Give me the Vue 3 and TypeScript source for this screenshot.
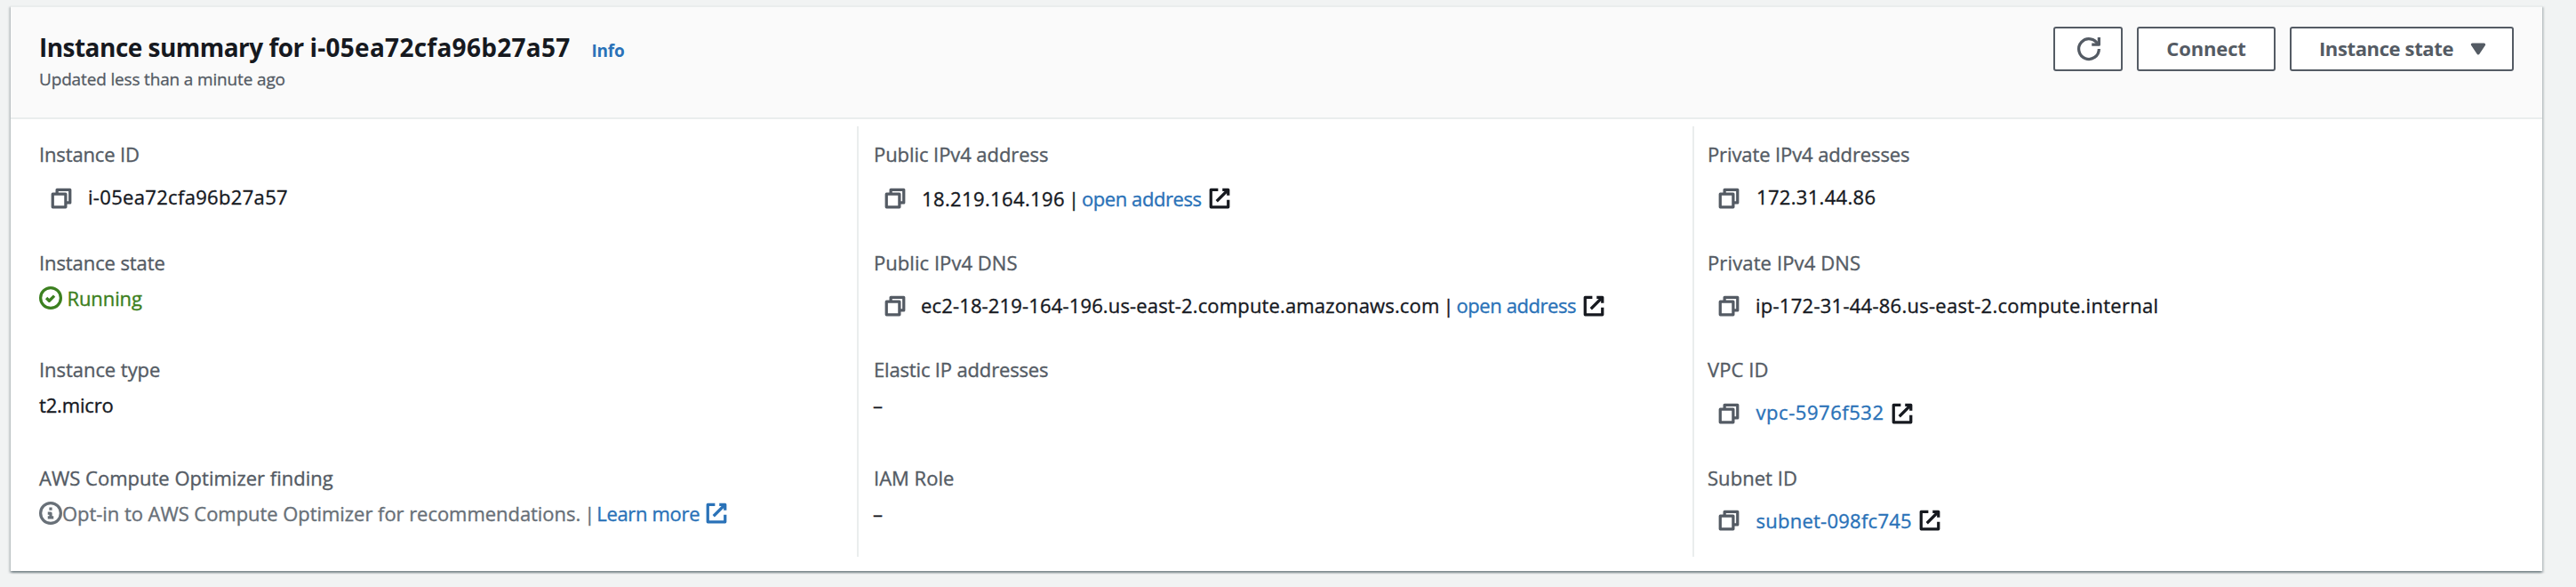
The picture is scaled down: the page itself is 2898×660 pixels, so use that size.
<script setup lang="ts">
interface Part {
  kind: 'text' | 'link' | 'bar' | 'icon'
  text?: string
  icon?: 'copy' | 'external' | 'check' | 'info'
  tone?: string
  gap?: number
  track?: number
}
interface Field {
  label: string
  track: number
  drop: number
  shift?: number
  parts: Part[]
}

const icons: Record<string, { circle?: boolean; paths: string[] }> = {
  copy: { paths: ['M2 5h9v9H2z', 'M5 5V2h9v9h-3'] },
  external: { paths: ['M10 2h4v4', 'M6 10l8-8', 'M14 9.05V14H2V2h5'] },
  check: { circle: true, paths: ['M5 8l2 2 3.52-3.52'] },
  info: { circle: true, paths: ['M8 11V8H6', 'M10 11H6', 'M8 6V4'] },
}

const copy = (gap = 11): Part => ({ kind: 'icon', icon: 'copy', tone: 'grey', gap })
const external = (gap: number, tone = 'ink'): Part => ({ kind: 'icon', icon: 'external', tone, gap })
const openAddress = (): Part[] => [
  { kind: 'bar', gap: 4 },
  { kind: 'link', text: 'open address', gap: 3, track: -0.43 },
  external(7),
]
const dash = (): Part => ({ kind: 'text', text: '–', gap: -1 })

const columns: Field[][] = [
  [
    { label: 'Instance ID', track: -0.14, drop: 18, shift: 2, parts: [copy(12), { kind: 'text', text: 'i-05ea72cfa96b27a57', gap: 17, track: 0.32 }] },
    { label: 'Instance state', track: -0.09, drop: 10, parts: [{ kind: 'icon', icon: 'check', tone: 'green', gap: 0 }, { kind: 'text', text: 'Running', tone: 'green', gap: 5.5, track: -0.1 }] },
    { label: 'Instance type', track: -0.05, drop: 10, parts: [{ kind: 'text', text: 't2.micro', gap: 0, track: -0.16 }] },
    {
      label: 'AWS Compute Optimizer finding', track: 0.01, drop: 10, parts: [
        { kind: 'icon', icon: 'info', tone: 'muted', gap: 0 },
        { kind: 'text', text: 'Opt-in to AWS Compute Optimizer for recommendations.', tone: 'muted', gap: 0, track: -0.05 },
        { kind: 'bar', tone: 'muted', gap: 4 },
        { kind: 'link', text: 'Learn more', gap: 2, track: -0.32 },
        external(6, 'blue'),
      ],
    },
  ],
  [
    { label: 'Public IPv4 address', track: -0.07, drop: 20, parts: [copy(), { kind: 'text', text: '18.219.164.196', gap: 17, track: 0.37 }, ...openAddress()] },
    { label: 'Public IPv4 DNS', track: 0.05, drop: 18, shift: 1, parts: [copy(), { kind: 'text', text: 'ec2-18-219-164-196.us-east-2.compute.amazonaws.com', gap: 16, track: 0.15 }, ...openAddress()] },
    { label: 'Elastic IP addresses', track: -0.16, drop: 10, parts: [dash()] },
    { label: 'IAM Role', track: 0.01, drop: 10, parts: [dash()] },
  ],
  [
    { label: 'Private IPv4 addresses', track: -0.11, drop: 18, shift: 2, parts: [copy(), { kind: 'text', text: '172.31.44.86', gap: 18, track: 0.32 }] },
    { label: 'Private IPv4 DNS', track: 0.13, drop: 18, shift: 1, parts: [copy(), { kind: 'text', text: 'ip-172-31-44-86.us-east-2.compute.internal', gap: 17, track: 0.26 }] },
    { label: 'VPC ID', track: 0.09, drop: 18, shift: 2, parts: [copy(), { kind: 'link', text: 'vpc-5976f532', gap: 17.5, track: 0.55 }, external(7)] },
    { label: 'Subnet ID', track: 0.05, drop: 18, parts: [copy(), { kind: 'link', text: 'subnet-098fc745', gap: 17.5, track: 0.25 }, external(7.5)] },
  ],
]

const iconStyle = (part: Part, field: Field) => ({
  marginLeft: `${part.gap ?? 0}px`,
  marginTop: `${(field.shift ?? 0) * 2}px`,
})
const textStyle = (part: Part) => ({
  marginLeft: `${part.gap ?? 0}px`,
  letterSpacing: `${part.track ?? 0}px`,
})
</script>

<template>
  <div class="page">
    <section class="card">
      <header class="head">
        <div class="heading">
          <div class="title-row">
            <h2>Instance summary for <span class="id">i-05ea72cfa96b27a57</span></h2>
            <a class="info">Info</a>
          </div>
          <p>Updated less than a minute ago</p>
        </div>
        <div class="actions">
          <button class="btn refresh" aria-label="Refresh">
            <svg class="icon" viewBox="0 0 16 16"><path d="M10 5h5V0" /><path d="M15 8a7 7 0 1 1-.7-3" /></svg>
          </button>
          <button class="btn connect">Connect</button>
          <button class="btn state">
            <span>Instance state</span>
            <svg class="icon caret" viewBox="0 0 16 16"><path d="M4 5h8l-4 6z" /></svg>
          </button>
        </div>
      </header>
      <div class="columns">
        <div v-for="(fields, c) in columns" :key="c" class="column">
          <div v-for="field in fields" :key="field.label" class="field">
            <div class="label" :style="{ letterSpacing: field.track + 'px' }">{{ field.label }}</div>
            <div class="value" :style="{ marginTop: field.drop + 'px' }">
              <template v-for="(part, i) in field.parts" :key="i">
                <svg v-if="part.kind === 'icon'" class="icon" :class="part.tone" :style="iconStyle(part, field)" viewBox="0 0 16 16">
                  <circle v-if="icons[part.icon!].circle" cx="8" cy="8" r="7" />
                  <path v-for="d in icons[part.icon!].paths" :key="d" :d="d" />
                </svg>
                <span v-else-if="part.kind === 'bar'" :class="part.tone" :style="textStyle(part)">|</span>
                <a v-else-if="part.kind === 'link'" class="blue" :style="textStyle(part)">{{ part.text }}</a>
                <span v-else :class="part.tone" :style="textStyle(part)">{{ part.text }}</span>
              </template>
            </div>
          </div>
        </div>
      </div>
    </section>
  </div>
</template>

<style>
body {
  background: #f1f3f3;
}
</style>

<style scoped>
.page {
  box-sizing: border-box;
  width: 2898px;
  height: 660px;
  padding: 6px 38px 18px 12px;
  overflow: hidden;
  background: #f1f3f3;
  color: #16191f;
  font: 22px/30px 'Open Sans', 'Noto Sans', sans-serif;
}
.card {
  box-sizing: border-box;
  height: 636px;
  border-top: 2px solid #eaeded;
  background: #fff;
  box-shadow:
    0 2px 2px 0 rgba(0, 28, 36, 0.3),
    2px 2px 2px 0 rgba(0, 28, 36, 0.15),
    -2px 2px 2px 0 rgba(0, 28, 36, 0.15);
}
.head {
  box-sizing: border-box;
  display: flex;
  justify-content: space-between;
  height: 126px;
  padding: 22px 32px 0 31px;
  border-bottom: 2px solid #eaeded;
  background: #fafafa;
}
.title-row {
  display: flex;
  align-items: baseline;
  height: 38px;
  padding: 4px 0 0 1px;
}
h2 {
  margin: 0;
  font-size: 28px;
  line-height: 38px;
  letter-spacing: -0.53px;
}
.id {
  letter-spacing: 0.27px;
}
.info {
  margin-left: 24px;
  color: #2a72b8;
  font-size: 19px;
  font-weight: 700;
  letter-spacing: -0.2px;
}
p {
  margin: 4px 0 0 1px;
  color: #545b64;
  font-size: 19px;
  line-height: 26px;
  letter-spacing: -0.16px;
  -webkit-text-stroke: 0.3px currentColor;
}
.actions {
  display: flex;
  gap: 16px;
}
.btn {
  box-sizing: border-box;
  display: flex;
  align-items: center;
  justify-content: center;
  height: 50px;
  padding: 0 0 3px;
  border: 2px solid #545b64;
  border-radius: 3px;
  background: #fff;
  color: #545b64;
  font: 700 22px/30px 'Open Sans', 'Noto Sans', sans-serif;
}
.refresh {
  width: 78px;
  padding: 0 0 0 1px;
}
.connect {
  width: 156px;
  letter-spacing: -0.14px;
}
.state {
  width: 252px;
  padding-left: 6px;
  gap: 15px;
  letter-spacing: -0.37px;
}
.icon {
  flex: none;
  width: 26px;
  height: 26px;
  overflow: visible;
  fill: none;
  stroke: currentColor;
  stroke-width: 2;
}
.icon path {
  stroke-linejoin: round;
}
.caret {
  position: relative;
  top: 1px;
  fill: currentColor;
}
.columns {
  display: grid;
  grid-template-columns: 952px 940px 956px;
  height: 484px;
  margin-top: 8px;
}
.column {
  display: grid;
  grid-template-rows: 122px 120px 122px 104px;
  padding: 16px 0 0 32px;
}
.column:nth-child(n + 2) {
  padding-left: 17px;
  border-left: 2px solid #eaeded;
}
.column:nth-child(3) {
  padding-left: 15px;
}
.label,
.value {
  height: 30px;
  white-space: nowrap;
  -webkit-text-stroke: 0.35px currentColor;
}
.label {
  color: #545b64;
}
.value {
  display: flex;
  align-items: center;
}
.grey {
  color: #545b64;
}
.muted {
  color: #687078;
}
.green {
  color: #3c8020;
}
.blue {
  color: #2a72b8;
}
</style>
